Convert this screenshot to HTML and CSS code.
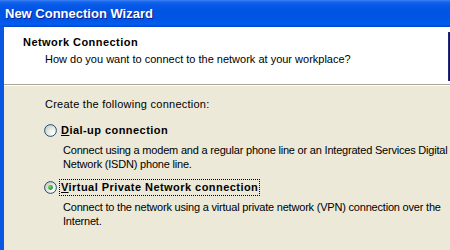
FILE: index.html
```html
<!DOCTYPE html>
<html>
<head>
<meta charset="utf-8">
<link rel="stylesheet" href="styles.css">
</head>
<body>
<div class="window">
  <div class="titlebar">New Connection Wizard</div>
  <div class="frame">
    <div class="header">
      <div class="header-text">
        <div class="header-title">Network Connection</div>
        <div class="header-sub">How do you want to connect to the network at your workplace?</div>
      </div>
      <div class="header-image">
        <svg width="49" height="49" viewBox="0 0 49 49">
          <rect x="0" y="0" width="49" height="49" fill="#0b1466"/>
          <rect x="0.5" y="0.5" width="48" height="48" fill="none" stroke="#1d2a80"/>
          <rect x="4" y="25" width="3" height="5" fill="#e8e8f0"/>
        </svg>
      </div>
    </div>
    <div class="content">
      <div class="intro">Create the following connection:</div>
      <div class="option">
        <div class="option-row">
          <svg class="radio" width="13" height="13" viewBox="0 0 13 13">
            <defs>
              <radialGradient id="rg1" cx="0.7" cy="0.7" r="0.8">
                <stop offset="0" stop-color="#ffffff"/>
                <stop offset="0.55" stop-color="#e6e6e0"/>
                <stop offset="1" stop-color="#c8c8c0"/>
              </radialGradient>
            </defs>
            <circle cx="6.5" cy="6.5" r="5.9" fill="url(#rg1)" stroke="#1c5180" stroke-width="1"/>
          </svg>
          <span class="option-label"><u>D</u>ial-up connection</span>
        </div>
        <div class="option-desc">Connect using a modem and a regular phone line or an Integrated Services Digital<br>Network (ISDN) phone line.</div>
      </div>
      <div class="option option-second">
        <div class="option-row">
          <svg class="radio" width="13" height="13" viewBox="0 0 13 13">
            <defs>
              <radialGradient id="rg2" cx="0.7" cy="0.7" r="0.8">
                <stop offset="0" stop-color="#ffffff"/>
                <stop offset="0.55" stop-color="#e6e6e0"/>
                <stop offset="1" stop-color="#c8c8c0"/>
              </radialGradient>
              <radialGradient id="dot" cx="0.35" cy="0.35" r="0.7">
                <stop offset="0" stop-color="#6ee06e"/>
                <stop offset="1" stop-color="#1a8a1a"/>
              </radialGradient>
            </defs>
            <circle cx="6.5" cy="6.5" r="5.9" fill="url(#rg2)" stroke="#1c5180" stroke-width="1"/>
            <circle cx="6.5" cy="6.5" r="2.4" fill="url(#dot)"/>
          </svg>
          <span class="option-label focused"><u>V</u>irtual Private Network connection</span>
        </div>
        <div class="option-desc">Connect to the network using a virtual private network (VPN) connection over the<br>Internet.</div>
      </div>
    </div>
  </div>
</div>
</body>
</html>
```
FILE: styles.css
```css
html, body {
  margin: 0;
  padding: 0;
  overflow: hidden;
  background: #ece9d8;
}
body {
  width: 450px;
  height: 250px;
  font-family: Tahoma, "Liberation Sans", Arial, sans-serif;
  font-size: 11px;
  color: #000;
}
.window {
  width: 520px;
  height: 250px;
  display: flex;
  flex-direction: column;
}
.titlebar {
  height: 27px;
  flex: none;
  box-sizing: border-box;
  padding: 6px 0 0 5px;
  color: #fff;
  font-family: "Liberation Sans", Arial, sans-serif;
  font-weight: bold;
  font-size: 13px;
  line-height: 16px;
  text-shadow: 1px 1px 0 #0a1e8c;
  background: linear-gradient(to bottom, #3e80f4 0, #1566ee 2px, #0758e6 5px, #0054e3 12px, #0056e6 20px, #005ef0 24px, #0047d2 27px);
}
.frame {
  flex: 1;
  border-left: 4px solid #0a57e4;
  display: flex;
  flex-direction: column;
  background: #ece9d8;
}
.header {
  height: 57px;
  flex: none;
  background: #fff;
  border-bottom: 1px solid #aca899;
  box-shadow: 0 1px 0 #fff;
  display: flex;
  justify-content: space-between;
  align-items: flex-start;
}
.header-text {
  padding: 9px 0 0 19px;
}
.header-title {
  font-weight: bold;
  line-height: 13px;
  letter-spacing: 0.45px;
}
.header-sub {
  margin: 4px 0 0 22px;
  line-height: 13px;
  white-space: nowrap;
}
.header-image {
  margin: 5px 23px 0 0;
  height: 49px;
}
.header-image svg {
  display: block;
}
.content {
  padding: 13px 0 0 41px;
}
.intro {
  line-height: 13px;
  letter-spacing: 0.25px;
}
.option {
  margin-top: 12px;
}
.option-second {
  margin-top: 9px;
}
.option-row {
  display: flex;
  align-items: center;
  margin-left: -1px;
  height: 15px;
}
.radio {
  flex: none;
  display: block;
}
.option-label {
  font-weight: bold;
  margin-left: 2px;
  padding: 1px 1px;
  line-height: 13px;
  letter-spacing: 0.45px;
  border: 1px solid transparent;
}
.option-label.focused {
  border: 1px dotted #000;
}
.option-desc {
  margin: 5px 0 0 18px;
  line-height: 14px;
  letter-spacing: -0.2px;
  white-space: nowrap;
}
```
